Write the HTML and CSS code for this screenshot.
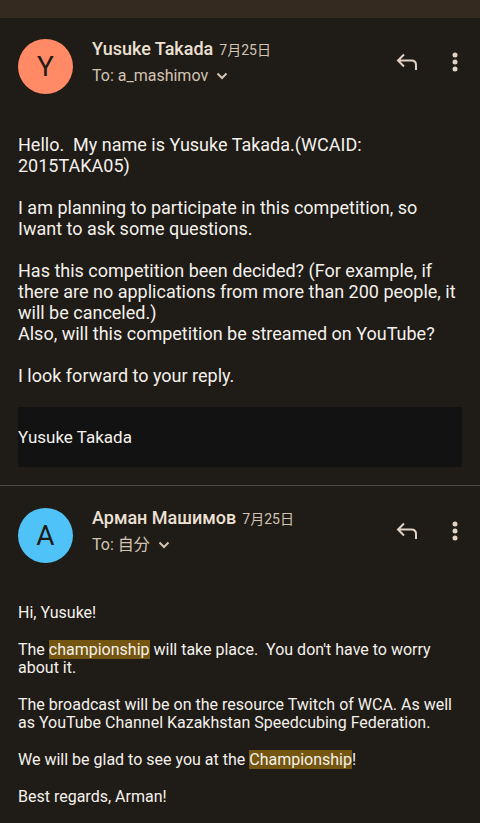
FILE: index.html
```html
<!DOCTYPE html>
<html lang="en">
<head>
    <meta charset="UTF-8">
    <meta name="viewport" content="width=device-width, initial-scale=1.0">
    <title>Mail</title>
    <link rel="stylesheet" href="styles.css">
</head>
<body>
    <div class="top-strip"></div>

    <main>
        <article class="message">
            <header class="message-header">
                <div class="avatar avatar-orange">Y</div>
                <div class="sender">
                    <div class="sender-line">
                        <h2>Yusuke Takada</h2>
                        <time datetime="07-25">7月25日</time>
                    </div>
                    <button class="recipient" type="button">
                        To: a_mashimov
                        <svg width="12" height="8" viewBox="0 0 12 8" aria-hidden="true"><path d="M1.5 1.5 6 6l4.5-4.5"/></svg>
                    </button>
                </div>
                <div class="actions">
                    <button type="button" aria-label="Reply">
                        <svg width="24" height="24" viewBox="0 0 24 24" aria-hidden="true"><path class="stroke" d="M9 4.5 3 10.5l6 6M3 10.5h13.5q4.5 0 4.5 4.5V20"/></svg>
                    </button>
                    <button type="button" aria-label="More options">
                        <svg width="24" height="24" viewBox="0 0 24 24" aria-hidden="true"><circle cx="12" cy="5" r="2.5"/><circle cx="12" cy="12" r="2.5"/><circle cx="12" cy="19" r="2.5"/></svg>
                    </button>
                </div>
            </header>
            <div class="message-body large">
                <p>Hello.&nbsp; My name is Yusuke Takada.(WCAID: 2015TAKA05)</p>
                <p>I am planning to participate in this competition, so Iwant to ask some questions.</p>
                <p>Has this competition been decided? (For example, if there are no applications from more than 200 people, it will be canceled.)<br>Also, will this competition be streamed on YouTube?</p>
                <p>I look forward to your reply.</p>
                <div class="signature">Yusuke Takada</div>
            </div>
        </article>

        <article class="message">
            <header class="message-header">
                <div class="avatar avatar-blue">A</div>
                <div class="sender">
                    <div class="sender-line">
                        <h2>Арман Машимов</h2>
                        <time datetime="07-25">7月25日</time>
                    </div>
                    <button class="recipient" type="button">
                        To: 自分
                        <svg width="12" height="8" viewBox="0 0 12 8" aria-hidden="true"><path d="M1.5 1.5 6 6l4.5-4.5"/></svg>
                    </button>
                </div>
                <div class="actions">
                    <button type="button" aria-label="Reply">
                        <svg width="24" height="24" viewBox="0 0 24 24" aria-hidden="true"><path class="stroke" d="M9 4.5 3 10.5l6 6M3 10.5h13.5q4.5 0 4.5 4.5V20"/></svg>
                    </button>
                    <button type="button" aria-label="More options">
                        <svg width="24" height="24" viewBox="0 0 24 24" aria-hidden="true"><circle cx="12" cy="5" r="2.5"/><circle cx="12" cy="12" r="2.5"/><circle cx="12" cy="19" r="2.5"/></svg>
                    </button>
                </div>
            </header>
            <div class="message-body">
                <p>Hi, Yusuke!</p>
                <p>The <mark>championship</mark> will take place.&nbsp; You don't have to worry about it.</p>
                <p>The broadcast will be on the resource Twitch of WCA. As well as YouTube Channel Kazakhstan Speedcubing Federation.</p>
                <p>We will be glad to see you at the <mark>Championship</mark>!</p>
                <p>Best regards, Arman!</p>
            </div>
        </article>
    </main>
</body>
</html>
```

FILE: styles.css
```css
body {
    margin: 0;
    font-family: Roboto, "Noto Sans CJK JP", sans-serif;
    background: #1f1b16;
    color: #f4f1ec;
}

.top-strip {
    height: 18px;
    background: #342a1f;
}

.message {
    padding: 17px 18px 18px;
}

.message + .message {
    border-top: 1px solid #4c4944;
    padding-top: 18px;
}

/* Sender row */
.message-header {
    display: flex;
    align-items: flex-start;
    margin-right: -13px;
}

.avatar {
    flex: none;
    width: 55px;
    height: 55px;
    margin-top: 4px;
    border-radius: 50%;
    color: #1f1b16;
    font-size: 28px;
    line-height: 55px;
    text-align: center;
}

.avatar-orange {
    background: #ff8a65;
}

.avatar-blue {
    background: #4fc3f7;
}

.sender {
    flex: 1;
    min-width: 0;
    margin: 1px 0 0 19px;
}

.sender-line {
    display: flex;
    align-items: baseline;
    gap: 6px;
    line-height: 26px;
}

.sender h2 {
    margin: 0;
    font-size: 18px;
    font-weight: 500;
    color: #ede0d4;
}

.sender time {
    font-size: 14px;
    color: #d3c4b4;
}

button {
    border: none;
    padding: 0;
    background: none;
    color: #d3c4b4;
    font-family: inherit;
    cursor: pointer;
}

.recipient {
    display: flex;
    align-items: center;
    gap: 8px;
    font-size: 16px;
    line-height: 26px;
}

.recipient path,
.stroke {
    fill: none;
    stroke: currentColor;
    stroke-width: 2;
}

.actions {
    display: flex;
    gap: 8px;
    margin-top: 7px;
}

.actions button {
    display: grid;
    place-items: center;
    width: 40px;
    height: 40px;
    color: #e0d2c5;
}

.actions circle {
    fill: currentColor;
}

/* Message text */
.message-body {
    margin-top: 41px;
    font-size: 16px;
    line-height: 18px;
}

.message-body p {
    margin: 0 0 19px;
}

.message-body.large {
    margin-top: 40px;
    font-size: 18px;
    line-height: 21px;
}

.message-body.large p {
    margin-bottom: 21px;
}

.message-body .signature {
    padding: 20px 0 19px;
    background: #121212;
    font-size: 17px;
}

mark {
    background: #745610;
    color: inherit;
}
```
